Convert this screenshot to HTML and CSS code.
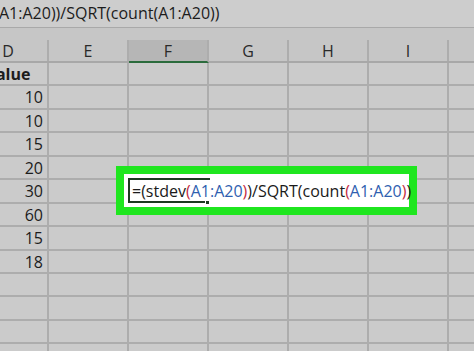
FILE: index.html
```html
<!DOCTYPE html>
<html>
<head>
<meta charset="utf-8">
<link rel="stylesheet" href="styles.css">
</head>
<body>
<div class="app">
  <div class="formula-bar"><span class="fx-text">A1:A20))/SQRT(count(A1:A20))</span></div>
  <div class="col-header">
    <div class="hcell">D</div>
    <div class="hcell">E</div>
    <div class="hcell selected">F</div>
    <div class="hcell">G</div>
    <div class="hcell">H</div>
    <div class="hcell">I</div>
    <div class="hcell"></div>
  </div>
  <div class="grid">
    <div class="cell label">Value</div><div class="cell"></div><div class="cell"></div><div class="cell"></div><div class="cell"></div><div class="cell"></div><div class="cell"></div>
    <div class="cell num">10</div><div class="cell"></div><div class="cell"></div><div class="cell"></div><div class="cell"></div><div class="cell"></div><div class="cell"></div>
    <div class="cell num">10</div><div class="cell"></div><div class="cell"></div><div class="cell"></div><div class="cell"></div><div class="cell"></div><div class="cell"></div>
    <div class="cell num">15</div><div class="cell"></div><div class="cell"></div><div class="cell"></div><div class="cell"></div><div class="cell"></div><div class="cell"></div>
    <div class="cell num">20</div><div class="cell"></div><div class="cell"></div><div class="cell"></div><div class="cell"></div><div class="cell"></div><div class="cell"></div>
    <div class="cell num">30</div><div class="cell"></div><div class="cell"></div><div class="cell"></div><div class="cell"></div><div class="cell"></div><div class="cell"></div>
    <div class="cell num">60</div><div class="cell"></div><div class="cell"></div><div class="cell"></div><div class="cell"></div><div class="cell"></div><div class="cell"></div>
    <div class="cell num">15</div><div class="cell"></div><div class="cell"></div><div class="cell"></div><div class="cell"></div><div class="cell"></div><div class="cell"></div>
    <div class="cell num">18</div><div class="cell"></div><div class="cell"></div><div class="cell"></div><div class="cell"></div><div class="cell"></div><div class="cell"></div>
    <div class="cell"></div><div class="cell"></div><div class="cell"></div><div class="cell"></div><div class="cell"></div><div class="cell"></div><div class="cell"></div>
    <div class="cell"></div><div class="cell"></div><div class="cell"></div><div class="cell"></div><div class="cell"></div><div class="cell"></div><div class="cell"></div>
    <div class="cell"></div><div class="cell"></div><div class="cell"></div><div class="cell"></div><div class="cell"></div><div class="cell"></div><div class="cell"></div>
    <div class="cell"></div><div class="cell"></div><div class="cell"></div><div class="cell"></div><div class="cell"></div><div class="cell"></div><div class="cell"></div>
  </div>
  <div class="edit-highlight">
    <div class="edit-box">
      <div class="active-cell"><span class="fill-handle"></span></div>
      <span class="edit-text">=(stdev<span class="paren">(</span><span class="ref">A1:A20</span><span class="paren">)</span>)/SQRT(count<span class="paren">(</span><span class="ref">A1:A20</span><span class="paren">)</span>)</span>
    </div>
  </div>
</div>
</body>
</html>
```

FILE: styles.css
```css
* { box-sizing: border-box; }
html, body {
  margin: 0;
  padding: 0;
  width: 474px;
  height: 351px;
  overflow: hidden;
  background: #cbcbcb;
}
.app {
  position: relative;
  width: 474px;
  height: 351px;
  overflow: hidden;
  font-family: "Open Sans", "Noto Sans", sans-serif;
  color: #1c1c1c;
}
.formula-bar {
  height: 28px;
  background: #cdcdcd;
  border-bottom: 1px solid #a9a9a9;
  display: flex;
  align-items: center;
  font-size: 16px;
  white-space: nowrap;
  padding-left: 0;
  padding-bottom: 1px;
}
.fx-text { margin-left: -1px; }
.col-header {
  display: grid;
  grid-template-columns: repeat(7, 80px);
  margin-left: -31px;
  padding-top: 12px;
  background: #c6c6c6;
  border-bottom: 2px solid #a8a8a8;
}
.hcell {
  height: 21px;
  border-right: 2px solid #adadad;
  display: flex;
  align-items: center;
  justify-content: center;
  font-size: 16px;
  color: #2a2a2a;
  padding-top: 1px;
}
.hcell.selected {
  background: #b6b6b6;
  border-bottom: 2px solid #2b6b3c;
  margin-bottom: -2px;
  height: 23px;
  padding-bottom: 1px;
}
.grid {
  display: grid;
  grid-template-columns: repeat(7, 80px);
  grid-auto-rows: 23.45px;
  margin-left: -31px;
}
.cell {
  border-right: 2px solid #adadad;
  border-bottom: 2px solid #adadad;
  font-size: 16px;
  line-height: 22px;
  padding: 0 3px;
  white-space: nowrap;
  background: #cbcbcb;
}
.cell.label { font-weight: 700; text-align: center; }
.cell.num { text-align: right; padding-right: 4px; }
.edit-highlight {
  position: absolute;
  left: 116px;
  top: 166px;
  width: 301px;
  height: 49px;
  background: #1fe61f;
  padding: 8px;
}
.edit-box {
  position: relative;
  height: 100%;
  background: #ffffff;
  display: flex;
  align-items: center;
  padding-left: 8px;
  font-size: 16px;
  white-space: nowrap;
  color: #1a1a1a;
}
.active-cell {
  position: absolute;
  left: 4px;
  top: 4px;
  width: 82px;
  height: 25px;
  border-top: 2px solid #1d3a22;
  border-left: 2px solid #1d3a22;
  border-bottom: 2px solid #1d3a22;
}
.fill-handle {
  position: absolute;
  right: 0;
  bottom: -4px;
  width: 5px;
  height: 5px;
  background: #1d3a22;
  border: 1px solid #fff;
}
.edit-text { position: relative; }
.paren { color: #c42b3f; }
.ref { color: #2f5fb0; }
```
